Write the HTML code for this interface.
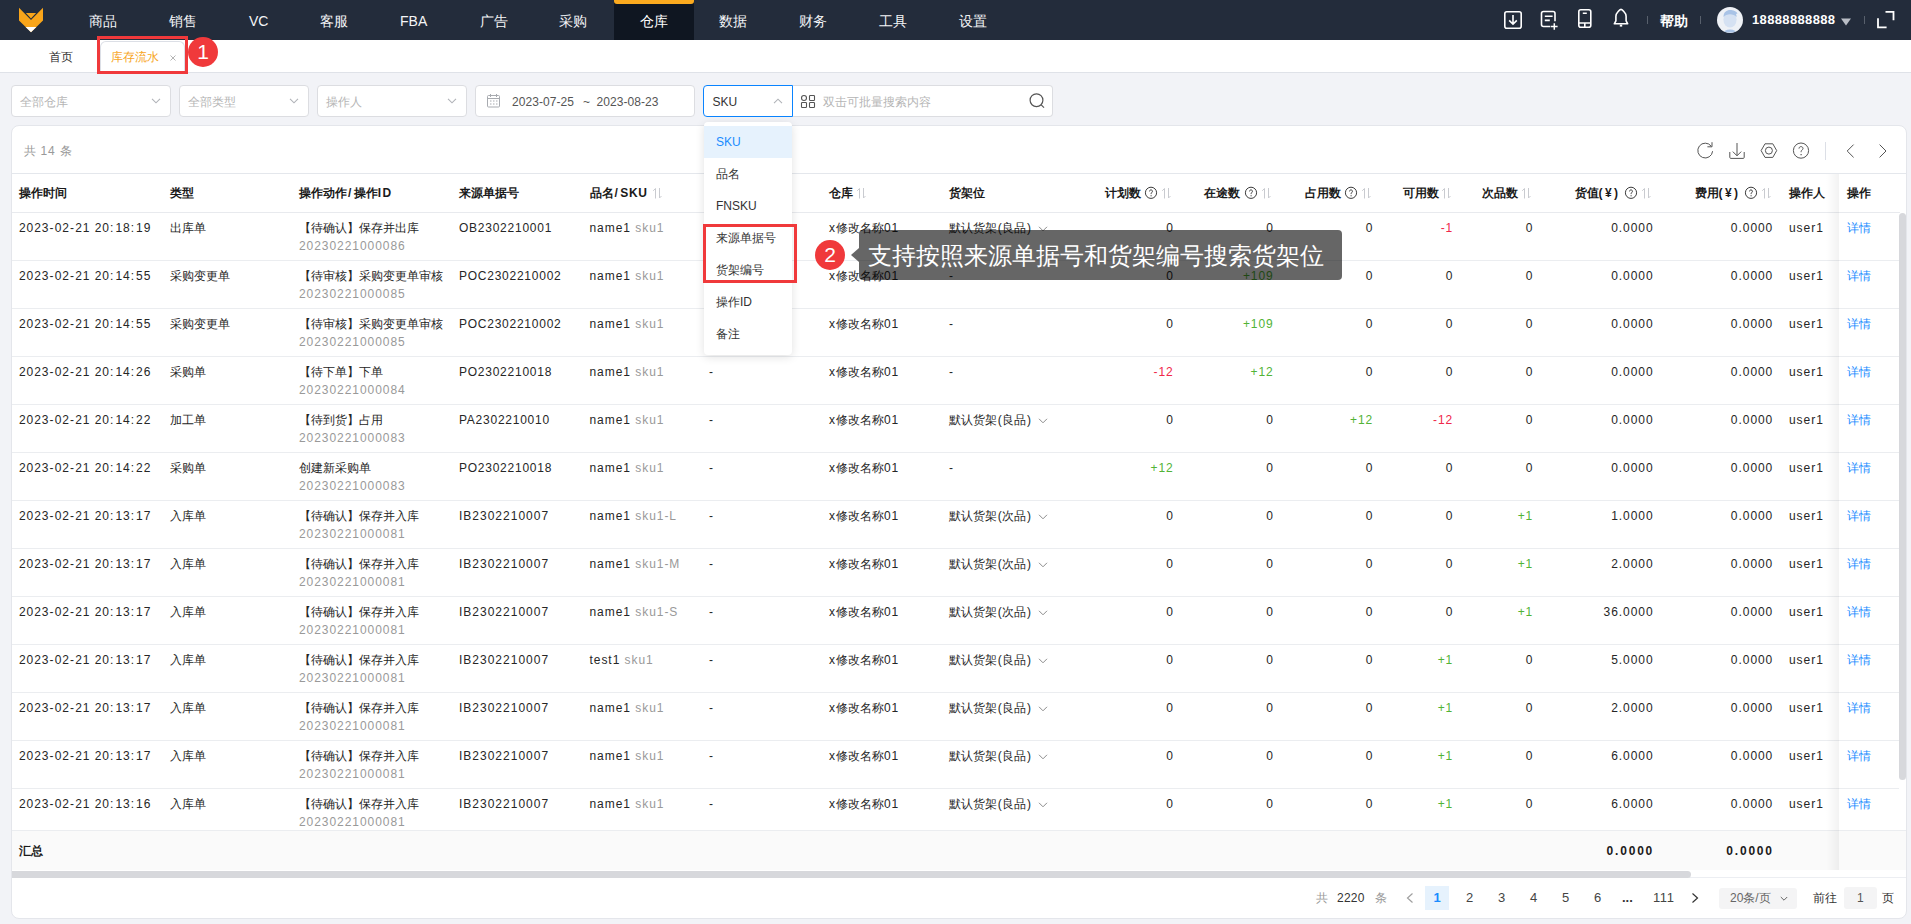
<!DOCTYPE html><html><head><meta charset="utf-8"><style>
*{box-sizing:border-box;margin:0;padding:0}
html,body{width:1911px;height:924px;overflow:hidden}
body{position:relative;background:#f2f3f7;font-family:"Liberation Sans",sans-serif;font-size:12px;color:#333}
.a{position:absolute;white-space:nowrap}
.t{position:absolute;white-space:nowrap;font-size:12px;line-height:14px}
.n{letter-spacing:0.95px}
#nav{left:0;top:0;width:1911px;height:40px;background:#232c3b}
.ni{position:absolute;top:0;height:40px;line-height:43px;font-size:14px;color:#f4f5f7}
.sel{position:absolute;top:85px;height:32px;background:#fff;border:1px solid #dcdde1;border-radius:4px}
.ph{position:absolute;font-size:12px;color:#b5b5b5;line-height:14px;top:8px}
.hd{position:absolute;top:186px;font-size:12px;line-height:14px;font-weight:bold;color:#1a1a1a;white-space:nowrap}
.c{position:absolute;font-size:12px;line-height:14px;color:#262626;white-space:nowrap}
.g{color:#999}
.gr{color:#52b336}
.rd{color:#f0284a}
.lk{color:#1a8cff}
.co{letter-spacing:2.1px}
.hy{letter-spacing:1.2px}
.sl{letter-spacing:2.5px;margin-left:1px}
.bi{letter-spacing:1.2px}
.yen{letter-spacing:2.4px}
.bn{letter-spacing:1.8px}
.pr{margin:0 0.7px}
.xm{margin-right:1px}
</style></head><body>
<div id="nav" class="a">
<svg class="a" style="left:0;top:0" width="60" height="40" viewBox="0 0 60 40">
<polygon points="19,7.8 31,19.9 43,7.8 43,20.4 31,32.2 19,20.4" fill="#f9a51a"/>
<polygon points="25.9,12.9 36.1,12.9 31,18.4" fill="#f9a51a"/>
<polygon points="25.6,27 36.4,27 31,32.2" fill="#fff"/>
</svg>
<div class="ni" style="left:89px">商品</div>
<div class="ni" style="left:169px">销售</div>
<div class="ni" style="left:249px">VC</div>
<div class="ni" style="left:320px">客服</div>
<div class="ni" style="left:400px">FBA</div>
<div class="ni" style="left:480px">广告</div>
<div class="ni" style="left:559px">采购</div>
<div class="a" style="left:614px;top:0;width:80px;height:40px;background:#0f1621"></div>
<div class="a" style="left:614px;top:0;width:80px;height:4px;background:#fbaa1f;border-radius:0 0 3px 3px"></div>
<div class="ni" style="left:640px;color:#fff">仓库</div>
<div class="ni" style="left:719px">数据</div>
<div class="ni" style="left:799px">财务</div>
<div class="ni" style="left:879px">工具</div>
<div class="ni" style="left:959px">设置</div>
<svg class="a" style="left:1490px;top:0" width="421" height="40" viewBox="1490 0 421 40" fill="none" stroke="#fff" stroke-width="1.6">
<rect x="1504.8" y="11.8" width="16.4" height="16.4" rx="2"/>
<path d="M1513 15v9M1509.2 20.4l3.8 3.8 3.8-3.8"/>
<path d="M1555 21.2v-7.7a2 2 0 0 0-2-2h-9.5a2 2 0 0 0-2 2v11a2 2 0 0 0 2 2h6.9"/>
<path d="M1544.8 16.3h7.8M1544.8 20.4h5"/>
<path d="M1554.3 23.2v6.6M1551 26.5h6.6" stroke-width="1.5"/>
<rect x="1578.8" y="9.8" width="12" height="17.5" rx="2"/>
<path d="M1582.8 13.2h4M1578.8 23h12M1584.8 23v4"/>
<path d="M1621 9.4c-1.2 0-2.4 1.6-3.2 2.6-1.2 1.2-1.9 2.4-1.9 4.2v4.6l-1.6 3h13.4l-1.6-3v-4.6c0-1.8-.7-3-1.9-4.2-.8-1-2-2.6-3.2-2.6z" stroke-linejoin="round"/>
<path d="M1619.8 25.6h2.4" stroke-width="2"/>
<path d="M1885.5 11.9h8v8.4M1886.6 27.3h-8.6v-9" stroke-width="1.8"/>
</svg>
<div class="a" style="left:1647px;top:16px;width:1px;height:8px;background:#58606c"></div>
<div class="a" style="left:1660px;top:14px;font-size:13.5px;line-height:16px;color:#fff;font-weight:bold">帮助</div>
<div class="a" style="left:1700px;top:16px;width:1px;height:8px;background:#58606c"></div>
<svg class="a" style="left:1716px;top:6px" width="28" height="28" viewBox="0 0 28 28">
<circle cx="14" cy="14" r="13" fill="#eef1f6"/>
<clipPath id="av"><circle cx="14" cy="14" r="12.6"/></clipPath>
<g clip-path="url(#av)">
<ellipse cx="14" cy="28" rx="7" ry="4.5" fill="#a9c3e6"/>
<ellipse cx="14" cy="13.5" rx="6.6" ry="8" fill="#d5e1f2"/>
<path d="M7.5 11c0-5 3.2-7 6.5-7s6.6 1.5 7.5 3.4l-1.5.5c.5 1 .6 2.2.6 3.1-1.5-2-4-2.8-6.6-2.8s-5 .8-6.5 2.8z" fill="#a9c3e6"/>
</g></svg>
<div class="a" style="left:1752px;top:12px;font-size:13px;line-height:16px;color:#fff;font-weight:bold;letter-spacing:0.35px">18888888888</div>
<svg class="a" style="left:1840px;top:17px" width="12" height="10"><polygon points="1,1.5 11,1.5 6,8.5" fill="#b9bdc5"/></svg>
<div class="a" style="left:1864px;top:16px;width:1px;height:8px;background:#58606c"></div>
</div>
<div class="a" style="left:0;top:40px;width:1911px;height:33px;background:#fff;border-bottom:1px solid #dfe2e8"></div>
<div class="t" style="left:49px;top:50px;color:#333">首页</div>
<div class="a" style="left:100px;top:41px;width:85px;height:32px;background:#fff;border:1px solid #dcdfe6;border-bottom:none;border-radius:6px 6px 0 0"></div>
<div class="t" style="left:111px;top:50px;color:#f7a524">库存流水</div>
<svg class="a" style="left:169px;top:53.5px" width="8" height="8" viewBox="0 0 8 8"><path d="M1.5 1.5l5 5M6.5 1.5l-5 5" stroke="#b4b4b4" stroke-width="1"/></svg>
<div class="sel" style="left:11px;width:160px"></div>
<div class="t" style="left:20px;top:95px;color:#b5b5b5">全部仓库</div>
<svg class="a" style="left:151px;top:98px" width="10" height="6" viewBox="0 0 10 6"><path d="M1 0.8l4 4 4-4" fill="none" stroke="#b0b3b8" stroke-width="1.1"/></svg>
<div class="sel" style="left:179px;width:130px"></div>
<div class="t" style="left:188px;top:95px;color:#b5b5b5">全部类型</div>
<svg class="a" style="left:289px;top:98px" width="10" height="6" viewBox="0 0 10 6"><path d="M1 0.8l4 4 4-4" fill="none" stroke="#b0b3b8" stroke-width="1.1"/></svg>
<div class="sel" style="left:317px;width:150px"></div>
<div class="t" style="left:326px;top:95px;color:#b5b5b5">操作人</div>
<svg class="a" style="left:447px;top:98px" width="10" height="6" viewBox="0 0 10 6"><path d="M1 0.8l4 4 4-4" fill="none" stroke="#b0b3b8" stroke-width="1.1"/></svg>
<div class="sel" style="left:475px;width:220px"></div>
<svg class="a" style="left:486px;top:94px" width="15" height="14" viewBox="0 0 15 14" fill="none" stroke="#a8abb0" stroke-width="1">
<rect x="1.5" y="1.5" width="12" height="11.5" rx="1"/><path d="M1.5 4.5h12M4.5 0v3M10.5 0v3"/>
<path d="M4 7h1.5M7 7h1.5M10 7h1.5M4 10h1.5M7 10h1.5M10 10h1.5"/></svg>
<div class="t n" style="left:512px;top:95px;color:#555;letter-spacing:0.05px">2023-07-25</div>
<div class="t" style="left:583px;top:95px;color:#555">~</div>
<div class="t" style="left:596.5px;top:95px;color:#555;letter-spacing:0.05px">2023-08-23</div>
<div class="a" style="left:703px;top:85px;width:90px;height:32px;background:#fff;border:1px solid #0a84ff;border-radius:4px 0 0 4px"></div>
<div class="t" style="left:712.5px;top:95px;color:#333">SKU</div>
<svg class="a" style="left:773px;top:98px" width="10" height="6" viewBox="0 0 10 6"><path d="M1 5.2l4-4 4 4" fill="none" stroke="#b0b3b8" stroke-width="1.1"/></svg>
<div class="a" style="left:793px;top:85px;width:260px;height:32px;background:#fff;border:1px solid #dcdde1;border-left:none;border-radius:0 4px 4px 0"></div>
<svg class="a" style="left:800px;top:94px" width="16" height="15" viewBox="0 0 16 15" fill="none" stroke="#555" stroke-width="1.1">
<rect x="1.5" y="1.5" width="5" height="5" rx="2.5"/><rect x="9.5" y="1.5" width="5" height="5" rx="0.8"/>
<rect x="1.5" y="8.5" width="5" height="5" rx="0.8"/><rect x="9.5" y="8.5" width="5" height="5" rx="0.8"/></svg>
<div class="t" style="left:823px;top:95px;color:#b5b5b5">双击可批量搜索内容</div>
<svg class="a" style="left:1028px;top:92px" width="18" height="17" viewBox="0 0 18 17" fill="none" stroke="#555" stroke-width="1.2">
<circle cx="8.5" cy="8.2" r="6.4"/><path d="M13.2 12.8l2.8 2.8"/></svg>
<div class="a" style="left:11px;top:125px;width:1896px;height:794px;background:#fff;border:1px solid #e4e6eb;border-radius:8px"></div>
<div class="t" style="left:24px;top:144px;color:#999">共<span class="n" style="margin-left:4.5px;margin-right:4.5px">14</span>条</div>
<svg class="a" style="left:1690px;top:136px" width="210" height="28" viewBox="1690 136 210 28" fill="none" stroke="#555" stroke-width="1">
<path d="M1711.2 146.2A7.4 7.4 0 1 0 1712.6 151.2"/><path d="M1712 142.2v4.6h-4.6"/>
<path d="M1737 143v12.6M1732.8 151.6l4.2 4.2 4.2-4.2M1729.8 152v5.4c0 .6.4 1 1 1h12.4c.6 0 1-.4 1-1v-5.4"/>
<path d="M1765 143.8h7.8l3.9 6.8-3.9 6.8h-7.8l-3.9-6.8z"/><circle cx="1768.9" cy="150.6" r="3.5"/>
<circle cx="1801" cy="150.6" r="7.6"/><path d="M1799 148.6c0-1.2.9-2 2-2s2 .8 2 1.9c0 1.4-1.9 1.6-1.9 3.2v.5"/><path d="M1801.1 153.9v1.3" stroke-width="1.2"/>
<path d="M1853.6 144.6l-6.4 6.4 6.4 6.4M1879.6 144.6l6.4 6.4-6.4 6.4"/>
</svg>
<div class="a" style="left:1825px;top:142px;width:1px;height:18px;background:#dcdfe6"></div>
<div class="a" style="left:12px;top:173px;width:1894px;height:1px;background:#e4e7ec"></div>
<div class="a" style="left:12px;top:212px;width:1894px;height:1px;background:#e8eaee"></div>
<div class="hd" style="left:19px;top:186px">操作时间</div>
<div class="hd" style="left:169.5px;top:186px">类型</div>
<div class="hd" style="left:299px;top:186px">操作动作<span class="sl">/</span>操作<span class="bi">ID</span></div>
<div class="hd" style="left:459px;top:186px">来源单据号</div>
<div class="hd" style="left:589.5px;top:186px">品名<span class="sl">/</span><span class="bi" style="letter-spacing:0.6px">SKU</span></div>
<svg class="a" style="left:652px;top:187px" width="10" height="12" viewBox="0 0 10 12" fill="none" stroke="#c9cbd0" stroke-width="1"><path d="M3.5 11.5V1.5L1.2 3.8M7.5 1v10l2-2"/></svg>
<div class="hd" style="left:709px;top:186px">批次号</div>
<div class="hd" style="left:829px;top:186px">仓库</div>
<svg class="a" style="left:856px;top:187px" width="10" height="12" viewBox="0 0 10 12" fill="none" stroke="#c9cbd0" stroke-width="1"><path d="M3.5 11.5V1.5L1.2 3.8M7.5 1v10l2-2"/></svg>
<div class="hd" style="left:949px;top:186px">货架位</div>
<div class="hd" style="left:1104.5px;top:186px">计划数</div>
<svg class="a" style="left:1144.0px;top:186px" width="14" height="14" viewBox="0 0 14 14" fill="none" stroke="#3c3c3c" stroke-width="1"><circle cx="7" cy="6.8" r="5.6"/><path d="M5.5 5.4c0-.9.7-1.5 1.5-1.5s1.5.6 1.5 1.4c0 1.1-1.4 1.2-1.4 2.4v.4"/><path d="M7.1 9.2v1.1" stroke-width="1"/></svg>
<svg class="a" style="left:1161px;top:187px" width="10" height="12" viewBox="0 0 10 12" fill="none" stroke="#c9cbd0" stroke-width="1"><path d="M3.5 11.5V1.5L1.2 3.8M7.5 1v10l2-2"/></svg>
<div class="hd" style="left:1204px;top:186px">在途数</div>
<svg class="a" style="left:1244.0px;top:186px" width="14" height="14" viewBox="0 0 14 14" fill="none" stroke="#3c3c3c" stroke-width="1"><circle cx="7" cy="6.8" r="5.6"/><path d="M5.5 5.4c0-.9.7-1.5 1.5-1.5s1.5.6 1.5 1.4c0 1.1-1.4 1.2-1.4 2.4v.4"/><path d="M7.1 9.2v1.1" stroke-width="1"/></svg>
<svg class="a" style="left:1261px;top:187px" width="10" height="12" viewBox="0 0 10 12" fill="none" stroke="#c9cbd0" stroke-width="1"><path d="M3.5 11.5V1.5L1.2 3.8M7.5 1v10l2-2"/></svg>
<div class="hd" style="left:1304.5px;top:186px">占用数</div>
<svg class="a" style="left:1344.0px;top:186px" width="14" height="14" viewBox="0 0 14 14" fill="none" stroke="#3c3c3c" stroke-width="1"><circle cx="7" cy="6.8" r="5.6"/><path d="M5.5 5.4c0-.9.7-1.5 1.5-1.5s1.5.6 1.5 1.4c0 1.1-1.4 1.2-1.4 2.4v.4"/><path d="M7.1 9.2v1.1" stroke-width="1"/></svg>
<svg class="a" style="left:1361px;top:187px" width="10" height="12" viewBox="0 0 10 12" fill="none" stroke="#c9cbd0" stroke-width="1"><path d="M3.5 11.5V1.5L1.2 3.8M7.5 1v10l2-2"/></svg>
<div class="hd" style="left:1402.5px;top:186px">可用数</div>
<svg class="a" style="left:1441px;top:187px" width="10" height="12" viewBox="0 0 10 12" fill="none" stroke="#c9cbd0" stroke-width="1"><path d="M3.5 11.5V1.5L1.2 3.8M7.5 1v10l2-2"/></svg>
<div class="hd" style="left:1482px;top:186px">次品数</div>
<svg class="a" style="left:1521px;top:187px" width="10" height="12" viewBox="0 0 10 12" fill="none" stroke="#c9cbd0" stroke-width="1"><path d="M3.5 11.5V1.5L1.2 3.8M7.5 1v10l2-2"/></svg>
<div class="hd" style="left:1574.5px;top:186px">货值<span class="yen">(¥</span>)</div>
<svg class="a" style="left:1624.0px;top:186px" width="14" height="14" viewBox="0 0 14 14" fill="none" stroke="#3c3c3c" stroke-width="1"><circle cx="7" cy="6.8" r="5.6"/><path d="M5.5 5.4c0-.9.7-1.5 1.5-1.5s1.5.6 1.5 1.4c0 1.1-1.4 1.2-1.4 2.4v.4"/><path d="M7.1 9.2v1.1" stroke-width="1"/></svg>
<svg class="a" style="left:1641px;top:187px" width="10" height="12" viewBox="0 0 10 12" fill="none" stroke="#c9cbd0" stroke-width="1"><path d="M3.5 11.5V1.5L1.2 3.8M7.5 1v10l2-2"/></svg>
<div class="hd" style="left:1694.5px;top:186px">费用<span class="yen">(¥</span>)</div>
<svg class="a" style="left:1744.0px;top:186px" width="14" height="14" viewBox="0 0 14 14" fill="none" stroke="#3c3c3c" stroke-width="1"><circle cx="7" cy="6.8" r="5.6"/><path d="M5.5 5.4c0-.9.7-1.5 1.5-1.5s1.5.6 1.5 1.4c0 1.1-1.4 1.2-1.4 2.4v.4"/><path d="M7.1 9.2v1.1" stroke-width="1"/></svg>
<svg class="a" style="left:1761px;top:187px" width="10" height="12" viewBox="0 0 10 12" fill="none" stroke="#c9cbd0" stroke-width="1"><path d="M3.5 11.5V1.5L1.2 3.8M7.5 1v10l2-2"/></svg>
<div class="hd" style="left:1789px;top:186px">操作人</div>
<div class="a" style="left:12px;top:213px;width:1894px;height:617px;overflow:hidden">
<div class="c n" style="left:7px;top:8px">2023<span class="hy">-</span>02<span class="hy">-</span>21 20<span class="co">:</span>18<span class="co">:</span>19</div>
<div class="c" style="left:157.5px;top:8px">出库单</div>
<div class="c" style="left:287px;top:8px">【待确认】保存并出库</div>
<div class="c n g" style="left:287px;top:26px">20230221000086</div>
<div class="c n" style="left:447px;top:8px;letter-spacing:0.75px">OB2302210001</div>
<div class="c n" style="left:577.5px;top:8px">name1 <span class="g">sku1</span></div>
<div class="c" style="left:817px;top:8px"><span class="xm">x</span>修改名称<span class="n">01</span></div>
<div class="c" style="left:937px;top:8px">默认货架<span class="pr">(</span>良品<span class="pr">)</span></div>
<svg class="a" style="left:1025.5px;top:13px" width="10" height="6" viewBox="0 0 10 6"><path d="M1 0.8l4 4 4-4" fill="none" stroke="#8c8c8c" stroke-width="1"/></svg>
<div class="c n " style="right:732.25px;top:8px">0</div>
<div class="c n " style="right:632.25px;top:8px">0</div>
<div class="c n " style="right:532.75px;top:8px">0</div>
<div class="c n rd" style="right:452.75px;top:8px">-1</div>
<div class="c n " style="right:372.75px;top:8px">0</div>
<div class="c n" style="right:252.45000000000005px;top:8px">0.0000</div>
<div class="c n" style="right:132.75px;top:8px">0.0000</div>
<div class="c n" style="left:1777px;top:8px">user1</div>
<div class="a" style="left:0;top:47px;width:1887px;height:1px;background:#ebedf0"></div>
<div class="c n" style="left:7px;top:56px">2023<span class="hy">-</span>02<span class="hy">-</span>21 20<span class="co">:</span>14<span class="co">:</span>55</div>
<div class="c" style="left:157.5px;top:56px">采购变更单</div>
<div class="c" style="left:287px;top:56px">【待审核】采购变更单审核</div>
<div class="c n g" style="left:287px;top:74px">20230221000085</div>
<div class="c n" style="left:447px;top:56px;letter-spacing:0.75px">POC2302210002</div>
<div class="c n" style="left:577.5px;top:56px">name1 <span class="g">sku1</span></div>
<div class="c" style="left:817px;top:56px"><span class="xm">x</span>修改名称<span class="n">01</span></div>
<div class="c" style="left:937px;top:56px">-</div>
<div class="c n " style="right:732.25px;top:56px">0</div>
<div class="c n gr" style="right:632.25px;top:56px">+109</div>
<div class="c n " style="right:532.75px;top:56px">0</div>
<div class="c n " style="right:452.75px;top:56px">0</div>
<div class="c n " style="right:372.75px;top:56px">0</div>
<div class="c n" style="right:252.45000000000005px;top:56px">0.0000</div>
<div class="c n" style="right:132.75px;top:56px">0.0000</div>
<div class="c n" style="left:1777px;top:56px">user1</div>
<div class="a" style="left:0;top:95px;width:1887px;height:1px;background:#ebedf0"></div>
<div class="c n" style="left:7px;top:104px">2023<span class="hy">-</span>02<span class="hy">-</span>21 20<span class="co">:</span>14<span class="co">:</span>55</div>
<div class="c" style="left:157.5px;top:104px">采购变更单</div>
<div class="c" style="left:287px;top:104px">【待审核】采购变更单审核</div>
<div class="c n g" style="left:287px;top:122px">20230221000085</div>
<div class="c n" style="left:447px;top:104px;letter-spacing:0.75px">POC2302210002</div>
<div class="c n" style="left:577.5px;top:104px">name1 <span class="g">sku1</span></div>
<div class="c" style="left:817px;top:104px"><span class="xm">x</span>修改名称<span class="n">01</span></div>
<div class="c" style="left:937px;top:104px">-</div>
<div class="c n " style="right:732.25px;top:104px">0</div>
<div class="c n gr" style="right:632.25px;top:104px">+109</div>
<div class="c n " style="right:532.75px;top:104px">0</div>
<div class="c n " style="right:452.75px;top:104px">0</div>
<div class="c n " style="right:372.75px;top:104px">0</div>
<div class="c n" style="right:252.45000000000005px;top:104px">0.0000</div>
<div class="c n" style="right:132.75px;top:104px">0.0000</div>
<div class="c n" style="left:1777px;top:104px">user1</div>
<div class="a" style="left:0;top:143px;width:1887px;height:1px;background:#ebedf0"></div>
<div class="c n" style="left:7px;top:152px">2023<span class="hy">-</span>02<span class="hy">-</span>21 20<span class="co">:</span>14<span class="co">:</span>26</div>
<div class="c" style="left:157.5px;top:152px">采购单</div>
<div class="c" style="left:287px;top:152px">【待下单】下单</div>
<div class="c n g" style="left:287px;top:170px">20230221000084</div>
<div class="c n" style="left:447px;top:152px;letter-spacing:0.75px">PO2302210018</div>
<div class="c n" style="left:577.5px;top:152px">name1 <span class="g">sku1</span></div>
<div class="c" style="left:697px;top:152px">-</div>
<div class="c" style="left:817px;top:152px"><span class="xm">x</span>修改名称<span class="n">01</span></div>
<div class="c" style="left:937px;top:152px">-</div>
<div class="c n rd" style="right:732.25px;top:152px">-12</div>
<div class="c n gr" style="right:632.25px;top:152px">+12</div>
<div class="c n " style="right:532.75px;top:152px">0</div>
<div class="c n " style="right:452.75px;top:152px">0</div>
<div class="c n " style="right:372.75px;top:152px">0</div>
<div class="c n" style="right:252.45000000000005px;top:152px">0.0000</div>
<div class="c n" style="right:132.75px;top:152px">0.0000</div>
<div class="c n" style="left:1777px;top:152px">user1</div>
<div class="a" style="left:0;top:191px;width:1887px;height:1px;background:#ebedf0"></div>
<div class="c n" style="left:7px;top:200px">2023<span class="hy">-</span>02<span class="hy">-</span>21 20<span class="co">:</span>14<span class="co">:</span>22</div>
<div class="c" style="left:157.5px;top:200px">加工单</div>
<div class="c" style="left:287px;top:200px">【待到货】占用</div>
<div class="c n g" style="left:287px;top:218px">20230221000083</div>
<div class="c n" style="left:447px;top:200px;letter-spacing:0.75px">PA2302210010</div>
<div class="c n" style="left:577.5px;top:200px">name1 <span class="g">sku1</span></div>
<div class="c" style="left:697px;top:200px">-</div>
<div class="c" style="left:817px;top:200px"><span class="xm">x</span>修改名称<span class="n">01</span></div>
<div class="c" style="left:937px;top:200px">默认货架<span class="pr">(</span>良品<span class="pr">)</span></div>
<svg class="a" style="left:1025.5px;top:205px" width="10" height="6" viewBox="0 0 10 6"><path d="M1 0.8l4 4 4-4" fill="none" stroke="#8c8c8c" stroke-width="1"/></svg>
<div class="c n " style="right:732.25px;top:200px">0</div>
<div class="c n " style="right:632.25px;top:200px">0</div>
<div class="c n gr" style="right:532.75px;top:200px">+12</div>
<div class="c n rd" style="right:452.75px;top:200px">-12</div>
<div class="c n " style="right:372.75px;top:200px">0</div>
<div class="c n" style="right:252.45000000000005px;top:200px">0.0000</div>
<div class="c n" style="right:132.75px;top:200px">0.0000</div>
<div class="c n" style="left:1777px;top:200px">user1</div>
<div class="a" style="left:0;top:239px;width:1887px;height:1px;background:#ebedf0"></div>
<div class="c n" style="left:7px;top:248px">2023<span class="hy">-</span>02<span class="hy">-</span>21 20<span class="co">:</span>14<span class="co">:</span>22</div>
<div class="c" style="left:157.5px;top:248px">采购单</div>
<div class="c" style="left:287px;top:248px">创建新采购单</div>
<div class="c n g" style="left:287px;top:266px">20230221000083</div>
<div class="c n" style="left:447px;top:248px;letter-spacing:0.75px">PO2302210018</div>
<div class="c n" style="left:577.5px;top:248px">name1 <span class="g">sku1</span></div>
<div class="c" style="left:697px;top:248px">-</div>
<div class="c" style="left:817px;top:248px"><span class="xm">x</span>修改名称<span class="n">01</span></div>
<div class="c" style="left:937px;top:248px">-</div>
<div class="c n gr" style="right:732.25px;top:248px">+12</div>
<div class="c n " style="right:632.25px;top:248px">0</div>
<div class="c n " style="right:532.75px;top:248px">0</div>
<div class="c n " style="right:452.75px;top:248px">0</div>
<div class="c n " style="right:372.75px;top:248px">0</div>
<div class="c n" style="right:252.45000000000005px;top:248px">0.0000</div>
<div class="c n" style="right:132.75px;top:248px">0.0000</div>
<div class="c n" style="left:1777px;top:248px">user1</div>
<div class="a" style="left:0;top:287px;width:1887px;height:1px;background:#ebedf0"></div>
<div class="c n" style="left:7px;top:296px">2023<span class="hy">-</span>02<span class="hy">-</span>21 20<span class="co">:</span>13<span class="co">:</span>17</div>
<div class="c" style="left:157.5px;top:296px">入库单</div>
<div class="c" style="left:287px;top:296px">【待确认】保存并入库</div>
<div class="c n g" style="left:287px;top:314px">20230221000081</div>
<div class="c n" style="left:447px;top:296px;letter-spacing:1px">IB2302210007</div>
<div class="c n" style="left:577.5px;top:296px">name1 <span class="g">sku1-L</span></div>
<div class="c" style="left:697px;top:296px">-</div>
<div class="c" style="left:817px;top:296px"><span class="xm">x</span>修改名称<span class="n">01</span></div>
<div class="c" style="left:937px;top:296px">默认货架<span class="pr">(</span>次品<span class="pr">)</span></div>
<svg class="a" style="left:1025.5px;top:301px" width="10" height="6" viewBox="0 0 10 6"><path d="M1 0.8l4 4 4-4" fill="none" stroke="#8c8c8c" stroke-width="1"/></svg>
<div class="c n " style="right:732.25px;top:296px">0</div>
<div class="c n " style="right:632.25px;top:296px">0</div>
<div class="c n " style="right:532.75px;top:296px">0</div>
<div class="c n " style="right:452.75px;top:296px">0</div>
<div class="c n gr" style="right:372.75px;top:296px">+1</div>
<div class="c n" style="right:252.45000000000005px;top:296px">1.0000</div>
<div class="c n" style="right:132.75px;top:296px">0.0000</div>
<div class="c n" style="left:1777px;top:296px">user1</div>
<div class="a" style="left:0;top:335px;width:1887px;height:1px;background:#ebedf0"></div>
<div class="c n" style="left:7px;top:344px">2023<span class="hy">-</span>02<span class="hy">-</span>21 20<span class="co">:</span>13<span class="co">:</span>17</div>
<div class="c" style="left:157.5px;top:344px">入库单</div>
<div class="c" style="left:287px;top:344px">【待确认】保存并入库</div>
<div class="c n g" style="left:287px;top:362px">20230221000081</div>
<div class="c n" style="left:447px;top:344px;letter-spacing:1px">IB2302210007</div>
<div class="c n" style="left:577.5px;top:344px">name1 <span class="g">sku1-M</span></div>
<div class="c" style="left:697px;top:344px">-</div>
<div class="c" style="left:817px;top:344px"><span class="xm">x</span>修改名称<span class="n">01</span></div>
<div class="c" style="left:937px;top:344px">默认货架<span class="pr">(</span>次品<span class="pr">)</span></div>
<svg class="a" style="left:1025.5px;top:349px" width="10" height="6" viewBox="0 0 10 6"><path d="M1 0.8l4 4 4-4" fill="none" stroke="#8c8c8c" stroke-width="1"/></svg>
<div class="c n " style="right:732.25px;top:344px">0</div>
<div class="c n " style="right:632.25px;top:344px">0</div>
<div class="c n " style="right:532.75px;top:344px">0</div>
<div class="c n " style="right:452.75px;top:344px">0</div>
<div class="c n gr" style="right:372.75px;top:344px">+1</div>
<div class="c n" style="right:252.45000000000005px;top:344px">2.0000</div>
<div class="c n" style="right:132.75px;top:344px">0.0000</div>
<div class="c n" style="left:1777px;top:344px">user1</div>
<div class="a" style="left:0;top:383px;width:1887px;height:1px;background:#ebedf0"></div>
<div class="c n" style="left:7px;top:392px">2023<span class="hy">-</span>02<span class="hy">-</span>21 20<span class="co">:</span>13<span class="co">:</span>17</div>
<div class="c" style="left:157.5px;top:392px">入库单</div>
<div class="c" style="left:287px;top:392px">【待确认】保存并入库</div>
<div class="c n g" style="left:287px;top:410px">20230221000081</div>
<div class="c n" style="left:447px;top:392px;letter-spacing:1px">IB2302210007</div>
<div class="c n" style="left:577.5px;top:392px">name1 <span class="g">sku1-S</span></div>
<div class="c" style="left:697px;top:392px">-</div>
<div class="c" style="left:817px;top:392px"><span class="xm">x</span>修改名称<span class="n">01</span></div>
<div class="c" style="left:937px;top:392px">默认货架<span class="pr">(</span>次品<span class="pr">)</span></div>
<svg class="a" style="left:1025.5px;top:397px" width="10" height="6" viewBox="0 0 10 6"><path d="M1 0.8l4 4 4-4" fill="none" stroke="#8c8c8c" stroke-width="1"/></svg>
<div class="c n " style="right:732.25px;top:392px">0</div>
<div class="c n " style="right:632.25px;top:392px">0</div>
<div class="c n " style="right:532.75px;top:392px">0</div>
<div class="c n " style="right:452.75px;top:392px">0</div>
<div class="c n gr" style="right:372.75px;top:392px">+1</div>
<div class="c n" style="right:252.45000000000005px;top:392px">36.0000</div>
<div class="c n" style="right:132.75px;top:392px">0.0000</div>
<div class="c n" style="left:1777px;top:392px">user1</div>
<div class="a" style="left:0;top:431px;width:1887px;height:1px;background:#ebedf0"></div>
<div class="c n" style="left:7px;top:440px">2023<span class="hy">-</span>02<span class="hy">-</span>21 20<span class="co">:</span>13<span class="co">:</span>17</div>
<div class="c" style="left:157.5px;top:440px">入库单</div>
<div class="c" style="left:287px;top:440px">【待确认】保存并入库</div>
<div class="c n g" style="left:287px;top:458px">20230221000081</div>
<div class="c n" style="left:447px;top:440px;letter-spacing:1px">IB2302210007</div>
<div class="c n" style="left:577.5px;top:440px">test1 <span class="g">sku1</span></div>
<div class="c" style="left:697px;top:440px">-</div>
<div class="c" style="left:817px;top:440px"><span class="xm">x</span>修改名称<span class="n">01</span></div>
<div class="c" style="left:937px;top:440px">默认货架<span class="pr">(</span>良品<span class="pr">)</span></div>
<svg class="a" style="left:1025.5px;top:445px" width="10" height="6" viewBox="0 0 10 6"><path d="M1 0.8l4 4 4-4" fill="none" stroke="#8c8c8c" stroke-width="1"/></svg>
<div class="c n " style="right:732.25px;top:440px">0</div>
<div class="c n " style="right:632.25px;top:440px">0</div>
<div class="c n " style="right:532.75px;top:440px">0</div>
<div class="c n gr" style="right:452.75px;top:440px">+1</div>
<div class="c n " style="right:372.75px;top:440px">0</div>
<div class="c n" style="right:252.45000000000005px;top:440px">5.0000</div>
<div class="c n" style="right:132.75px;top:440px">0.0000</div>
<div class="c n" style="left:1777px;top:440px">user1</div>
<div class="a" style="left:0;top:479px;width:1887px;height:1px;background:#ebedf0"></div>
<div class="c n" style="left:7px;top:488px">2023<span class="hy">-</span>02<span class="hy">-</span>21 20<span class="co">:</span>13<span class="co">:</span>17</div>
<div class="c" style="left:157.5px;top:488px">入库单</div>
<div class="c" style="left:287px;top:488px">【待确认】保存并入库</div>
<div class="c n g" style="left:287px;top:506px">20230221000081</div>
<div class="c n" style="left:447px;top:488px;letter-spacing:1px">IB2302210007</div>
<div class="c n" style="left:577.5px;top:488px">name1 <span class="g">sku1</span></div>
<div class="c" style="left:697px;top:488px">-</div>
<div class="c" style="left:817px;top:488px"><span class="xm">x</span>修改名称<span class="n">01</span></div>
<div class="c" style="left:937px;top:488px">默认货架<span class="pr">(</span>良品<span class="pr">)</span></div>
<svg class="a" style="left:1025.5px;top:493px" width="10" height="6" viewBox="0 0 10 6"><path d="M1 0.8l4 4 4-4" fill="none" stroke="#8c8c8c" stroke-width="1"/></svg>
<div class="c n " style="right:732.25px;top:488px">0</div>
<div class="c n " style="right:632.25px;top:488px">0</div>
<div class="c n " style="right:532.75px;top:488px">0</div>
<div class="c n gr" style="right:452.75px;top:488px">+1</div>
<div class="c n " style="right:372.75px;top:488px">0</div>
<div class="c n" style="right:252.45000000000005px;top:488px">2.0000</div>
<div class="c n" style="right:132.75px;top:488px">0.0000</div>
<div class="c n" style="left:1777px;top:488px">user1</div>
<div class="a" style="left:0;top:527px;width:1887px;height:1px;background:#ebedf0"></div>
<div class="c n" style="left:7px;top:536px">2023<span class="hy">-</span>02<span class="hy">-</span>21 20<span class="co">:</span>13<span class="co">:</span>17</div>
<div class="c" style="left:157.5px;top:536px">入库单</div>
<div class="c" style="left:287px;top:536px">【待确认】保存并入库</div>
<div class="c n g" style="left:287px;top:554px">20230221000081</div>
<div class="c n" style="left:447px;top:536px;letter-spacing:1px">IB2302210007</div>
<div class="c n" style="left:577.5px;top:536px">name1 <span class="g">sku1</span></div>
<div class="c" style="left:697px;top:536px">-</div>
<div class="c" style="left:817px;top:536px"><span class="xm">x</span>修改名称<span class="n">01</span></div>
<div class="c" style="left:937px;top:536px">默认货架<span class="pr">(</span>良品<span class="pr">)</span></div>
<svg class="a" style="left:1025.5px;top:541px" width="10" height="6" viewBox="0 0 10 6"><path d="M1 0.8l4 4 4-4" fill="none" stroke="#8c8c8c" stroke-width="1"/></svg>
<div class="c n " style="right:732.25px;top:536px">0</div>
<div class="c n " style="right:632.25px;top:536px">0</div>
<div class="c n " style="right:532.75px;top:536px">0</div>
<div class="c n gr" style="right:452.75px;top:536px">+1</div>
<div class="c n " style="right:372.75px;top:536px">0</div>
<div class="c n" style="right:252.45000000000005px;top:536px">6.0000</div>
<div class="c n" style="right:132.75px;top:536px">0.0000</div>
<div class="c n" style="left:1777px;top:536px">user1</div>
<div class="a" style="left:0;top:575px;width:1887px;height:1px;background:#ebedf0"></div>
<div class="c n" style="left:7px;top:584px">2023<span class="hy">-</span>02<span class="hy">-</span>21 20<span class="co">:</span>13<span class="co">:</span>16</div>
<div class="c" style="left:157.5px;top:584px">入库单</div>
<div class="c" style="left:287px;top:584px">【待确认】保存并入库</div>
<div class="c n g" style="left:287px;top:602px">20230221000081</div>
<div class="c n" style="left:447px;top:584px;letter-spacing:1px">IB2302210007</div>
<div class="c n" style="left:577.5px;top:584px">name1 <span class="g">sku1</span></div>
<div class="c" style="left:697px;top:584px">-</div>
<div class="c" style="left:817px;top:584px"><span class="xm">x</span>修改名称<span class="n">01</span></div>
<div class="c" style="left:937px;top:584px">默认货架<span class="pr">(</span>良品<span class="pr">)</span></div>
<svg class="a" style="left:1025.5px;top:589px" width="10" height="6" viewBox="0 0 10 6"><path d="M1 0.8l4 4 4-4" fill="none" stroke="#8c8c8c" stroke-width="1"/></svg>
<div class="c n " style="right:732.25px;top:584px">0</div>
<div class="c n " style="right:632.25px;top:584px">0</div>
<div class="c n " style="right:532.75px;top:584px">0</div>
<div class="c n gr" style="right:452.75px;top:584px">+1</div>
<div class="c n " style="right:372.75px;top:584px">0</div>
<div class="c n" style="right:252.45000000000005px;top:584px">6.0000</div>
<div class="c n" style="right:132.75px;top:584px">0.0000</div>
<div class="c n" style="left:1777px;top:584px">user1</div>
</div>
<div class="a" style="left:12px;top:830px;width:1894px;height:40px;background:#fafafa;border-top:1px solid #ebedf0"></div>
<div class="hd" style="left:19px;top:844px">汇总</div>
<div class="hd bn" style="right:256.90000000000003px;top:844px">0.0000</div>
<div class="hd bn" style="right:137.2px;top:844px">0.0000</div>
<div class="a" style="left:1826px;top:174px;width:13px;height:696px;background:linear-gradient(to right,rgba(0,0,0,0),rgba(0,0,0,0.05))"></div>
<div class="a" style="left:1838.5px;top:174px;width:67.5px;height:656px;background:#fff"></div>
<div class="a" style="left:1838.5px;top:830px;width:67.5px;height:40px;background:#fafafa;border-top:1px solid #ebedf0"></div>
<div class="a" style="left:1838.5px;top:212px;width:61px;height:1px;background:#e8eaee"></div>
<div class="hd" style="left:1847px;top:186px">操作</div>
<div class="c lk" style="left:1847px;top:221px">详情</div>
<div class="a" style="left:1838.5px;top:260px;width:60.5px;height:1px;background:#ebedf0"></div>
<div class="c lk" style="left:1847px;top:269px">详情</div>
<div class="a" style="left:1838.5px;top:308px;width:60.5px;height:1px;background:#ebedf0"></div>
<div class="c lk" style="left:1847px;top:317px">详情</div>
<div class="a" style="left:1838.5px;top:356px;width:60.5px;height:1px;background:#ebedf0"></div>
<div class="c lk" style="left:1847px;top:365px">详情</div>
<div class="a" style="left:1838.5px;top:404px;width:60.5px;height:1px;background:#ebedf0"></div>
<div class="c lk" style="left:1847px;top:413px">详情</div>
<div class="a" style="left:1838.5px;top:452px;width:60.5px;height:1px;background:#ebedf0"></div>
<div class="c lk" style="left:1847px;top:461px">详情</div>
<div class="a" style="left:1838.5px;top:500px;width:60.5px;height:1px;background:#ebedf0"></div>
<div class="c lk" style="left:1847px;top:509px">详情</div>
<div class="a" style="left:1838.5px;top:548px;width:60.5px;height:1px;background:#ebedf0"></div>
<div class="c lk" style="left:1847px;top:557px">详情</div>
<div class="a" style="left:1838.5px;top:596px;width:60.5px;height:1px;background:#ebedf0"></div>
<div class="c lk" style="left:1847px;top:605px">详情</div>
<div class="a" style="left:1838.5px;top:644px;width:60.5px;height:1px;background:#ebedf0"></div>
<div class="c lk" style="left:1847px;top:653px">详情</div>
<div class="a" style="left:1838.5px;top:692px;width:60.5px;height:1px;background:#ebedf0"></div>
<div class="c lk" style="left:1847px;top:701px">详情</div>
<div class="a" style="left:1838.5px;top:740px;width:60.5px;height:1px;background:#ebedf0"></div>
<div class="c lk" style="left:1847px;top:749px">详情</div>
<div class="a" style="left:1838.5px;top:788px;width:60.5px;height:1px;background:#ebedf0"></div>
<div class="c lk" style="left:1847px;top:797px">详情</div>
<div class="a" style="left:1899px;top:213px;width:7px;height:567px;background:#d7d8dc;border-radius:4px"></div>
<div class="a" style="left:12px;top:870px;width:1894px;height:8px;background:#fff;border-bottom:1px solid #eceef2"></div>
<div class="a" style="left:12px;top:871px;width:1679px;height:7px;background:#d7d8dc;border-radius:0 4px 4px 0"></div>
<div class="t" style="left:1316px;top:891px;color:#999">共</div>
<div class="t n" style="left:1337px;top:891px;color:#333;letter-spacing:0.25px">2220</div>
<div class="t" style="left:1375px;top:891px;color:#999">条</div>
<svg class="a" style="left:1404px;top:891px" width="12" height="14" viewBox="0 0 12 14"><path d="M8.5 2.5l-5 4.5 5 4.5" fill="none" stroke="#a0a0a0" stroke-width="1.2"/></svg>
<div class="a" style="left:1425px;top:886px;width:24px;height:24px;background:#e6f2fd"></div>
<div class="t" style="left:1433.5px;top:891px;color:#1a8cff;font-weight:bold;font-size:13px">1</div>
<div class="t" style="left:1466px;top:891px;color:#444;font-size:13px">2</div>
<div class="t" style="left:1498px;top:891px;color:#444;font-size:13px">3</div>
<div class="t" style="left:1530px;top:891px;color:#444;font-size:13px">4</div>
<div class="t" style="left:1562px;top:891px;color:#444;font-size:13px">5</div>
<div class="t" style="left:1594px;top:891px;color:#444;font-size:13px">6</div>
<div class="t" style="left:1622px;top:891px;color:#333;font-weight:bold;font-size:13px">...</div>
<div class="t" style="left:1653px;top:891px;color:#444;font-size:13px;letter-spacing:0.6px">111</div>
<svg class="a" style="left:1689px;top:891px" width="12" height="14" viewBox="0 0 12 14"><path d="M3.5 2.5l5 4.5-5 4.5" fill="none" stroke="#333" stroke-width="1.2"/></svg>
<div class="a" style="left:1719px;top:888px;width:78px;height:21px;background:#f4f4f5;border-radius:3px"></div>
<div class="t" style="left:1730px;top:891px;color:#666">20条/页</div>
<svg class="a" style="left:1780px;top:896px" width="8" height="6" viewBox="0 0 8 6"><path d="M0.8 1l3.2 3.2 3.2-3.2" fill="none" stroke="#666" stroke-width="1"/></svg>
<div class="t" style="left:1813px;top:891px;color:#333">前往</div>
<div class="a" style="left:1843.5px;top:887px;width:33.5px;height:22px;background:#f4f4f5;border-radius:3px"></div>
<div class="t" style="left:1857px;top:891px;color:#555">1</div>
<div class="t" style="left:1882px;top:891px;color:#333">页</div>
<div class="a" style="left:704px;top:122px;width:88px;height:233px;background:#fff;border-radius:4px;box-shadow:0 2px 10px rgba(0,0,0,0.12)"></div>
<div class="a" style="left:704px;top:126px;width:88px;height:32px;background:#e6f2fd"></div>
<div class="t" style="left:716px;top:135px;color:#1a8cff">SKU</div>
<div class="t" style="left:716px;top:167px;color:#333">品名</div>
<div class="t" style="left:716px;top:199px;color:#333">FNSKU</div>
<div class="t" style="left:716px;top:231px;color:#333">来源单据号</div>
<div class="t" style="left:716px;top:263px;color:#333">货架编号</div>
<div class="t" style="left:716px;top:295px;color:#333">操作ID</div>
<div class="t" style="left:716px;top:327px;color:#333">备注</div>
<div class="a" style="left:97px;top:36px;width:91px;height:38px;border:3px solid #f0393b"></div>
<div class="a" style="left:703px;top:224px;width:94px;height:59px;border:3px solid #f0393b"></div>
<div class="a" style="left:188px;top:37px;width:30px;height:30px;border-radius:15px;background:#f0393b;color:#fff;font-size:21px;line-height:30px;text-align:center">1</div>
<div class="a" style="left:815px;top:240px;width:30px;height:30px;border-radius:15px;background:#f0393b;color:#fff;font-size:21px;line-height:30px;text-align:center">2</div>
<div class="a" style="left:859px;top:230px;width:483px;height:50px;background:rgba(0,0,0,0.6);border-radius:4px"></div>
<svg class="a" style="left:851px;top:248px" width="8" height="14" viewBox="0 0 8 14"><polygon points="0,7 8,0 8,14" fill="rgba(0,0,0,0.6)"/></svg>
<div class="a" style="left:868px;top:241px;font-size:24px;line-height:30px;color:#fff">支持按照来源单据号和货架编号搜索货架位</div>
</body></html>
